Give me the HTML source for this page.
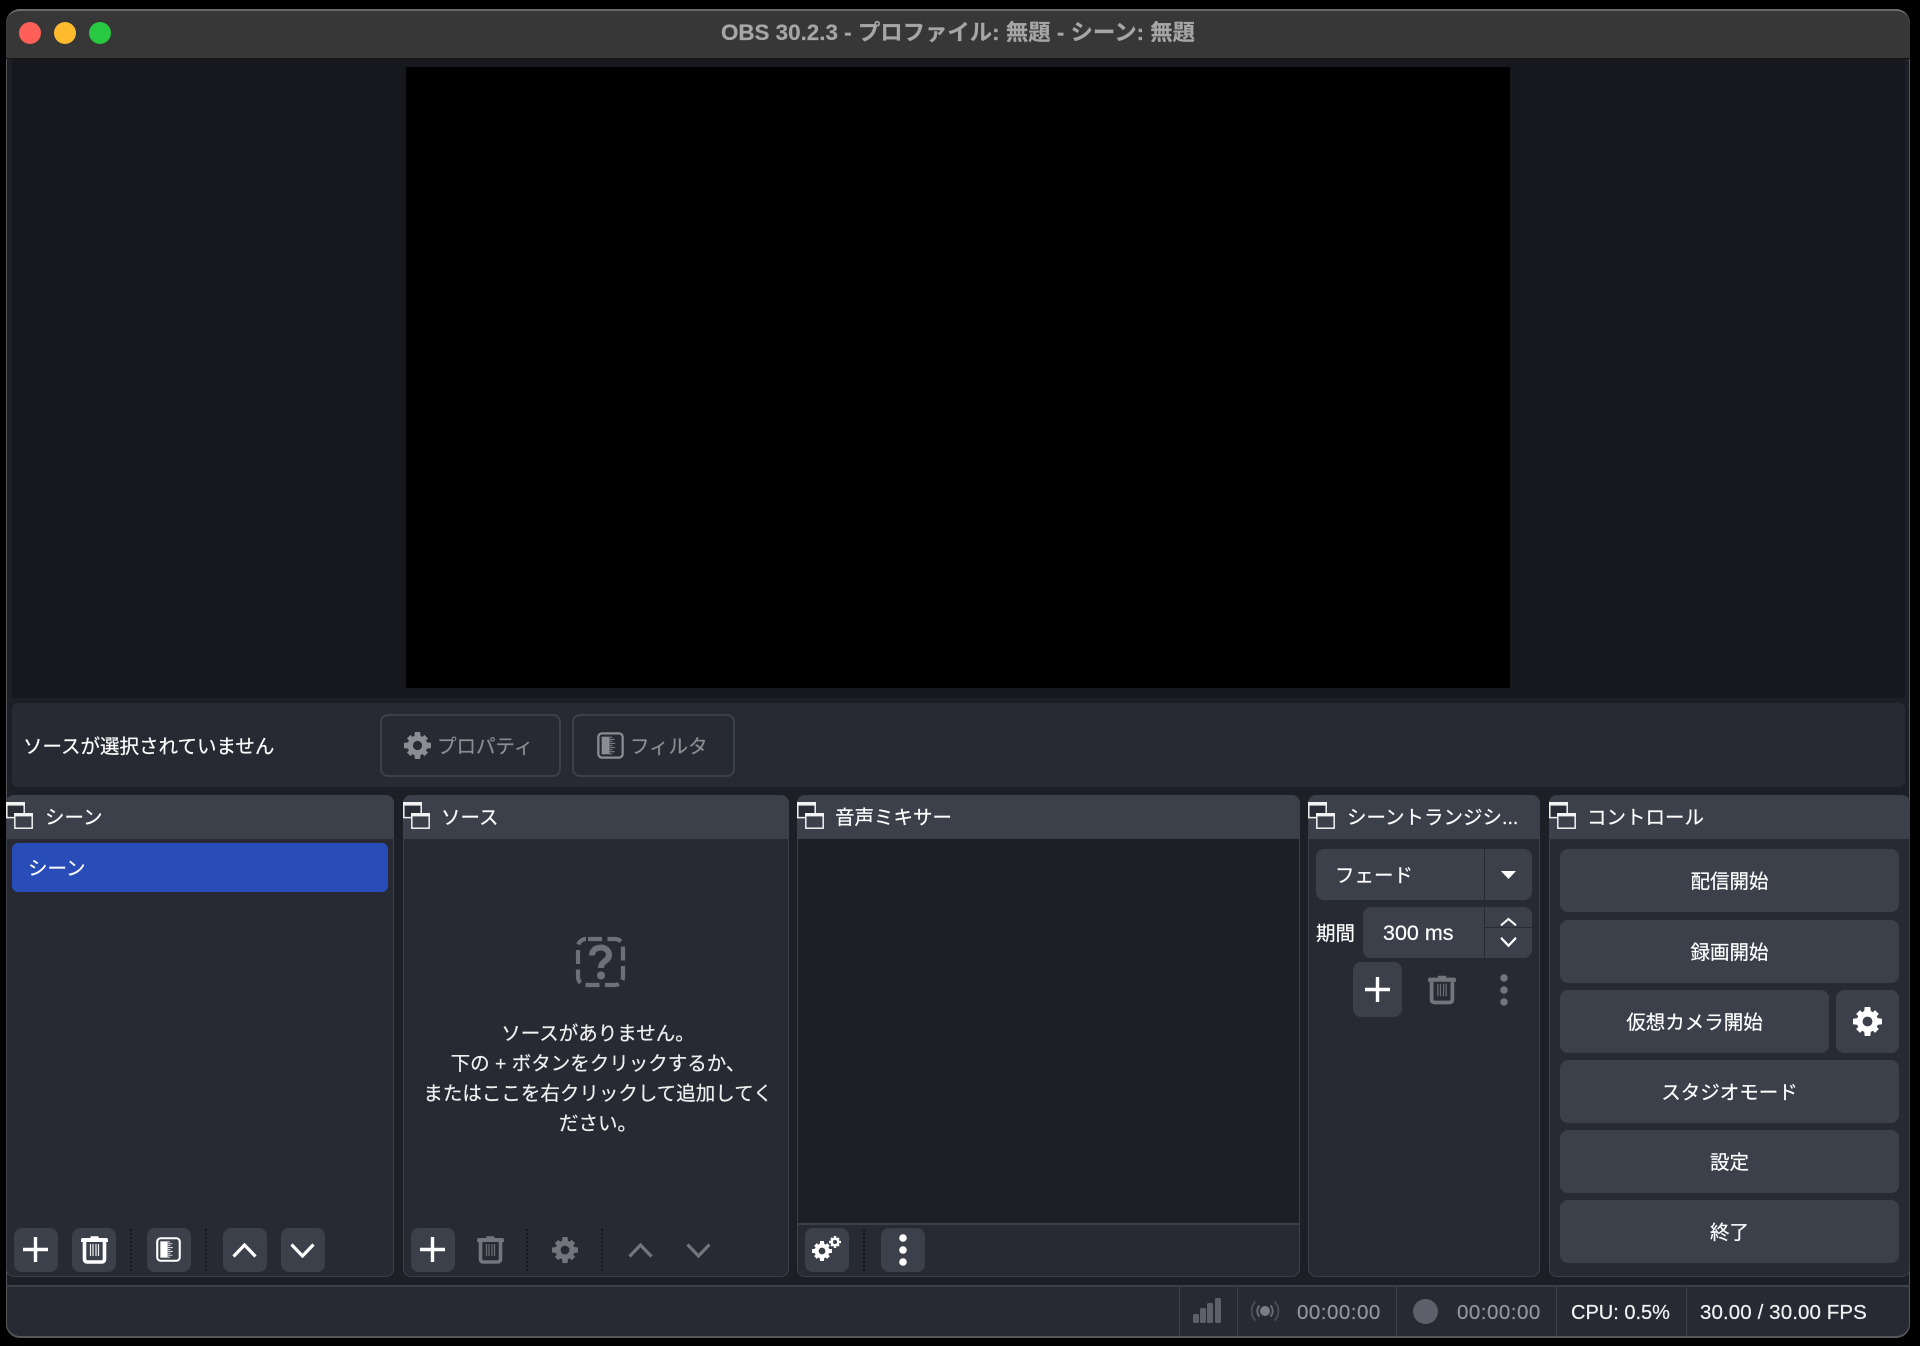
<!DOCTYPE html>
<html lang="ja"><head><meta charset="utf-8"><title>OBS 30.2.3</title>
<style>
html,body{margin:0;padding:0;background:#000;width:1920px;height:1346px;overflow:hidden}
body{position:relative;font-family:"Liberation Sans","Noto Sans CJK JP",sans-serif;font-size:19.5px;color:#fff;-webkit-text-stroke:.2px currentColor}
.a{position:absolute;box-sizing:border-box}
.c{display:flex;align-items:center;justify-content:center;white-space:nowrap}
.l{display:flex;align-items:center;white-space:nowrap}
.btn{background:#3c404b;border-radius:8px}
.btn.c{padding-bottom:2px}
.dock{background:#272a33;border:1.5px solid #3c404b;border-top:0;border-radius:8px}
.hd{background:#3c404b;border-radius:8px 8px 0 0}
.sep{width:0;border-left:2px dotted #14161a}
.vs{width:1px;background:#3c404b;top:1286px;height:50px}
svg{position:absolute;overflow:visible}
.st{font-size:20.5px;letter-spacing:.1px}
.tm{letter-spacing:.5px}
</style></head><body>
<svg width="0" height="0" style="position:absolute"><defs>
<symbol id="dk" viewBox="0 0 27 27"><rect x=".8" y=".8" width="17.4" height="14.8" fill="#2a2d36" stroke="#f2f2f2" stroke-width="1.5"/><rect x="0" y="0" width="19" height="3.6" fill="#f2f2f2"/><rect x="8.8" y="11.8" width="17.4" height="14.4" fill="#3c404b" stroke="#f2f2f2" stroke-width="1.5"/><rect x="8" y="11" width="19" height="3.4" fill="#f2f2f2"/></symbol>
<symbol id="plus" viewBox="0 0 25 25"><path d="M12.5 0V25M0 12.5H25" stroke="currentColor" stroke-width="3.4" fill="none"/></symbol>
<symbol id="trash" viewBox="0 0 27 29"><path d="M9.5 3V1.2H17.5V3H25.5Q27 3 27 5.5V7H0V5.5Q0 3 1.5 3Z" fill="currentColor"/><path d="M3.5 7V24Q3.5 27 6.5 27H20.5Q23.5 27 23.5 24V7" fill="none" stroke="currentColor" stroke-width="3.6"/><path d="M9.5 9V21M12 9V21M15 9V21M17.5 9V21" stroke="currentColor" stroke-width="1.2" opacity=".9"/></symbol>
<symbol id="filter" viewBox="0 0 26 26"><rect x="1.3" y="1.3" width="23.4" height="23.4" rx="3.5" fill="none" stroke="currentColor" stroke-width="2.2"/><rect x="4.5" y="4.5" width="7.5" height="17" fill="currentColor"/><path d="M12 5H14.5M12 7H17M12 9H15M12 11H17.5M12 13H15M12 15H17.5M12 17H15M12 19H17M12 21H14.5" stroke="currentColor" stroke-width="1.1" fill="none" opacity=".8"/></symbol>
<symbol id="gear" viewBox="0 0 26 26"><circle cx="13" cy="13" r="7" fill="none" stroke="currentColor" stroke-width="5.2"/><path d="M10.5 0H15.5L16 4H10ZM10.5 26H15.5L16 22H10ZM0 10.5V15.5L4 16V10ZM26 10.5V15.5L22 16V10ZM2.8 6.3L6.3 2.8 9.2 5.8 5.8 9.2ZM23.2 6.3L19.7 2.8 16.8 5.8 20.2 9.2ZM2.8 19.7L6.3 23.2 9.2 20.2 5.8 16.8ZM23.2 19.7L19.7 23.2 16.8 20.2 20.2 16.8Z" fill="currentColor"/></symbol>
<symbol id="up" viewBox="0 0 25 15"><path d="M1.5 13.5L12.5 2 23.5 13.5" fill="none" stroke="currentColor" stroke-width="3.2"/></symbol>
<symbol id="down" viewBox="0 0 25 15"><path d="M1.5 1.5L12.5 13 23.5 1.5" fill="none" stroke="currentColor" stroke-width="3.2"/></symbol>
<symbol id="dots" viewBox="0 0 8 32"><circle cx="4" cy="4" r="3.8" fill="currentColor"/><circle cx="4" cy="16" r="3.8" fill="currentColor"/><circle cx="4" cy="28" r="3.8" fill="currentColor"/></symbol>
</defs></svg>

<!-- window -->
<div class="a" style="left:6px;top:9px;width:1904px;height:1329px;background:#1d1f26;border-radius:14px;box-shadow:0 0 0 1px #55575c inset"></div>
<!-- title bar -->
<div class="a" style="left:6px;top:9px;width:1904px;height:50px;background:#373737;border-radius:14px 14px 0 0;border-top:2px solid #6a6a6a;border-bottom:1px solid #151515"></div>
<div class="a" style="left:19px;top:22px;width:22px;height:22px;border-radius:50%;background:#fe5f58"></div>
<div class="a" style="left:54px;top:22px;width:22px;height:22px;border-radius:50%;background:#febb2e"></div>
<div class="a" style="left:89px;top:22px;width:22px;height:22px;border-radius:50%;background:#28c840"></div>
<div class="a c" style="left:600px;top:12px;width:716px;height:38px;font-weight:700;font-size:22.4px;color:#a6a6a6">OBS 30.2.3 - プロファイル: 無題 - シーン: 無題</div>

<!-- preview -->
<div class="a" style="left:12px;top:59px;width:1893px;height:639px;background:#16181d"></div>
<div class="a" style="left:406px;top:67px;width:1104px;height:621px;background:#000"></div>

<!-- source toolbar -->
<div class="a" style="left:12px;top:703px;width:1893px;height:84px;background:#272a33;border-radius:6px"></div>
<div class="a l" style="left:23px;top:723px;height:42px;color:#fff">ソースが選択されていません</div>
<div class="a" style="left:380px;top:714px;width:181px;height:63px;border:2px solid #3c404b;border-radius:8px"></div>
<svg style="left:404px;top:732px;color:#8c8d92" width="27" height="27"><use href="#gear"/></svg>
<div class="a l" style="left:437px;top:723px;height:42px;color:#8c8d92">プロパティ</div>
<div class="a" style="left:572px;top:714px;width:163px;height:63px;border:2px solid #3c404b;border-radius:8px"></div>
<svg style="left:597px;top:732px;color:#8c8d92" width="27" height="27"><use href="#filter"/></svg>
<div class="a l" style="left:630px;top:723px;height:42px;color:#8c8d92">フィルタ</div>

<!-- scene dock -->
<div class="a dock" style="left:6px;top:795px;width:388px;height:482px"></div>
<div class="a hd" style="left:6px;top:795px;width:388px;height:44px"></div>
<svg style="left:6px;top:802px" width="27" height="27"><use href="#dk"/></svg>
<div class="a l" style="left:45px;top:793px;height:44px">シーン</div>
<div class="a l" style="left:12px;top:843px;width:376px;height:49px;background:#284cb8;border-radius:6px;padding:0 0 2px 16px">シーン</div>

<div class="a btn" style="left:14px;top:1228px;width:44px;height:44px"></div>
<svg style="left:23px;top:1237px;color:#fff" width="25" height="25"><use href="#plus"/></svg>
<div class="a btn" style="left:72px;top:1228px;width:44px;height:44px"></div>
<svg style="left:81px;top:1235px;color:#fff" width="27" height="29"><use href="#trash"/></svg>
<div class="a sep" style="left:130px;top:1229px;height:42px"></div>
<div class="a btn" style="left:147px;top:1228px;width:44px;height:44px"></div>
<svg style="left:156px;top:1237px;color:#fff" width="25" height="25"><use href="#filter"/></svg>
<div class="a sep" style="left:205px;top:1229px;height:42px"></div>
<div class="a btn" style="left:223px;top:1228px;width:44px;height:44px"></div>
<svg style="left:232px;top:1243px;color:#fff" width="25" height="15"><use href="#up"/></svg>
<div class="a btn" style="left:281px;top:1228px;width:44px;height:44px"></div>
<svg style="left:290px;top:1243px;color:#fff" width="25" height="15"><use href="#down"/></svg>

<!-- sources dock -->
<div class="a dock" style="left:403px;top:795px;width:386px;height:482px"></div>
<div class="a hd" style="left:403px;top:795px;width:386px;height:44px"></div>
<svg style="left:403px;top:802px" width="27" height="27"><use href="#dk"/></svg>
<div class="a l" style="left:441px;top:793px;height:44px">ソース</div>
<svg style="left:576px;top:937px" width="49" height="50" viewBox="0 0 49 50"><rect x="2" y="2" width="45" height="46" rx="8" fill="none" stroke="#6e7079" stroke-width="4.2" stroke-dasharray="14 5.5 14 5.5" stroke-dashoffset="-2"/><path d="M16 18.5C16 8 33 8 33 18C33 24 25 24 25 31" fill="none" stroke="#6e7079" stroke-width="6"/><circle cx="25" cy="38.5" r="4" fill="#6e7079"/></svg>
<div class="a c" style="left:405px;top:1016px;width:386px;height:30px;color:#f0f0f0">ソースがありません。</div>
<div class="a c" style="left:405px;top:1046px;width:386px;height:30px;color:#f0f0f0">下の + ボタンをクリックするか、</div>
<div class="a c" style="left:405px;top:1076px;width:386px;height:30px;color:#f0f0f0">またはここを右クリックして追加してく</div>
<div class="a c" style="left:405px;top:1106px;width:386px;height:30px;color:#f0f0f0">ださい。</div>
<div class="a btn" style="left:411px;top:1228px;width:44px;height:44px"></div>
<svg style="left:420px;top:1237px;color:#fff" width="25" height="25"><use href="#plus"/></svg>
<svg style="left:477px;top:1235px;color:#74757c" width="27" height="29"><use href="#trash"/></svg>
<div class="a sep" style="left:526px;top:1229px;height:42px"></div>
<svg style="left:552px;top:1237px;color:#74757c" width="26" height="26"><use href="#gear"/></svg>
<div class="a sep" style="left:601px;top:1229px;height:42px"></div>
<svg style="left:628px;top:1243px;color:#74757c" width="25" height="15"><use href="#up"/></svg>
<svg style="left:686px;top:1243px;color:#74757c" width="25" height="15"><use href="#down"/></svg>

<!-- mixer dock -->
<div class="a dock" style="left:797px;top:795px;width:503px;height:482px"></div>
<div class="a" style="left:798px;top:839px;width:501px;height:386px;background:#1d1f26;border-bottom:2px solid #3c404b"></div>
<div class="a hd" style="left:797px;top:795px;width:503px;height:44px"></div>
<svg style="left:797px;top:802px" width="27" height="27"><use href="#dk"/></svg>
<div class="a l" style="left:835px;top:793px;height:44px">音声ミキサー</div>
<div class="a btn" style="left:805px;top:1228px;width:44px;height:44px"></div>
<svg style="left:812px;top:1241px;color:#fff" width="20" height="20"><use href="#gear"/></svg>
<svg style="left:829px;top:1236px;color:#fff" width="12" height="12"><use href="#gear"/></svg>
<div class="a sep" style="left:863px;top:1229px;height:42px"></div>
<div class="a btn" style="left:881px;top:1228px;width:44px;height:44px"></div>
<svg style="left:899px;top:1234px;color:#fff" width="8" height="32"><use href="#dots"/></svg>

<!-- transitions dock -->
<div class="a dock" style="left:1308px;top:795px;width:232px;height:482px"></div>
<div class="a hd" style="left:1308px;top:795px;width:232px;height:44px"></div>
<svg style="left:1308px;top:802px" width="27" height="27"><use href="#dk"/></svg>
<div class="a l" style="left:1347px;top:793px;height:44px">シーントランジシ...</div>
<div class="a btn l" style="left:1316px;top:849px;width:216px;height:51px;padding:0 0 2px 19px">フェード</div>
<div class="a" style="left:1484px;top:849px;width:1px;height:51px;background:#272a33"></div>
<svg style="left:1501px;top:871px" width="15" height="8"><path d="M0 0H15L7.5 8Z" fill="#fff"/></svg>
<div class="a l" style="left:1316px;top:911px;height:40px">期間</div>
<div class="a btn" style="left:1363px;top:907px;width:169px;height:51px"></div>
<div class="a l" style="left:1383px;top:913px;height:40px;font-size:21.5px">300 ms</div>
<div class="a" style="left:1484px;top:907px;width:1px;height:51px;background:#272a33"></div>
<div class="a" style="left:1484px;top:927px;width:48px;height:1px;background:#272a33"></div>
<svg style="left:1500px;top:918px;color:#fff" width="17" height="8" viewBox="0 0 25 12" preserveAspectRatio="none"><path d="M1.5 11L12.5 1.5 23.5 11" fill="none" stroke="#fff" stroke-width="3"/></svg>
<svg style="left:1500px;top:937px;color:#fff" width="17" height="10" viewBox="0 0 25 12" preserveAspectRatio="none"><path d="M1.5 1L12.5 10.5 23.5 1" fill="none" stroke="#fff" stroke-width="3"/></svg>
<div class="a btn" style="left:1353px;top:962px;width:49px;height:55px"></div>
<svg style="left:1365px;top:977px;color:#fff" width="25" height="25"><use href="#plus"/></svg>
<svg style="left:1428px;top:974px;color:#74757c" width="28" height="31"><use href="#trash"/></svg>
<svg style="left:1500px;top:974px;color:#74757c" width="8" height="32"><use href="#dots"/></svg>

<!-- controls dock -->
<div class="a dock" style="left:1549px;top:795px;width:361px;height:482px"></div>
<div class="a hd" style="left:1549px;top:795px;width:361px;height:44px"></div>
<svg style="left:1549px;top:802px" width="27" height="27"><use href="#dk"/></svg>
<div class="a l" style="left:1587px;top:793px;height:44px">コントロール</div>
<div class="a btn c" style="left:1560px;top:849px;width:339px;height:63px">配信開始</div>
<div class="a btn c" style="left:1560px;top:920px;width:339px;height:63px">録画開始</div>
<div class="a btn c" style="left:1560px;top:990px;width:269px;height:63px">仮想カメラ開始</div>
<div class="a btn" style="left:1836px;top:990px;width:63px;height:63px"></div>
<svg style="left:1853px;top:1007px;color:#fff" width="29" height="29"><use href="#gear"/></svg>
<div class="a btn c" style="left:1560px;top:1060px;width:339px;height:63px">スタジオモード</div>
<div class="a btn c" style="left:1560px;top:1130px;width:339px;height:63px">設定</div>
<div class="a btn c" style="left:1560px;top:1200px;width:339px;height:63px">終了</div>

<!-- status bar -->
<div class="a" style="left:6px;top:1285px;width:1904px;height:53px;background:#272a33;border-top:2px solid #3c404b;border-left:1px solid #55575c;border-right:1px solid #55575c;border-bottom:2px solid #55575c;border-radius:0 0 14px 14px"></div>
<div class="a vs" style="left:1179px"></div>
<div class="a vs" style="left:1237px"></div>
<div class="a vs" style="left:1396px"></div>
<div class="a vs" style="left:1556px"></div>
<div class="a vs" style="left:1686px"></div>
<svg style="left:1193px;top:1298px" width="28" height="26"><g fill="#5d6069"><rect x="0" y="16" width="6" height="9" rx="1.5"/><rect x="7" y="10" width="6" height="15" rx="1.5"/><rect x="14" y="5" width="6" height="20" rx="1.5"/><rect x="22" y="0" width="6" height="25" rx="1.5"/></g></svg>
<svg style="left:1251px;top:1298px" width="28" height="28" viewBox="0 0 28 28"><circle cx="14" cy="13" r="5" fill="#7a7c85"/><path d="M8.5 7.5a8 8 0 0 0 0 11M19.5 7.5a8 8 0 0 1 0 11" fill="none" stroke="#696b74" stroke-width="2"/><path d="M4.5 3.5a13.5 13.5 0 0 0 0 19M23.5 3.5a13.5 13.5 0 0 1 0 19" fill="none" stroke="#494b54" stroke-width="2"/></svg>
<div class="a l st tm" style="left:1297px;top:1292px;height:42px;color:#94959b">00:00:00</div>
<div class="a" style="left:1413px;top:1299px;width:25px;height:25px;border-radius:50%;background:#5d606a"></div>
<div class="a l st tm" style="left:1457px;top:1292px;height:42px;color:#94959b">00:00:00</div>
<div class="a l st" style="left:1571px;top:1292px;height:42px;color:#f2f2f2;font-size:20px;letter-spacing:0">CPU: 0.5%</div>
<div class="a l st" style="left:1700px;top:1292px;height:42px;color:#f2f2f2;letter-spacing:.1px">30.00 / 30.00 FPS</div>
</body></html>
